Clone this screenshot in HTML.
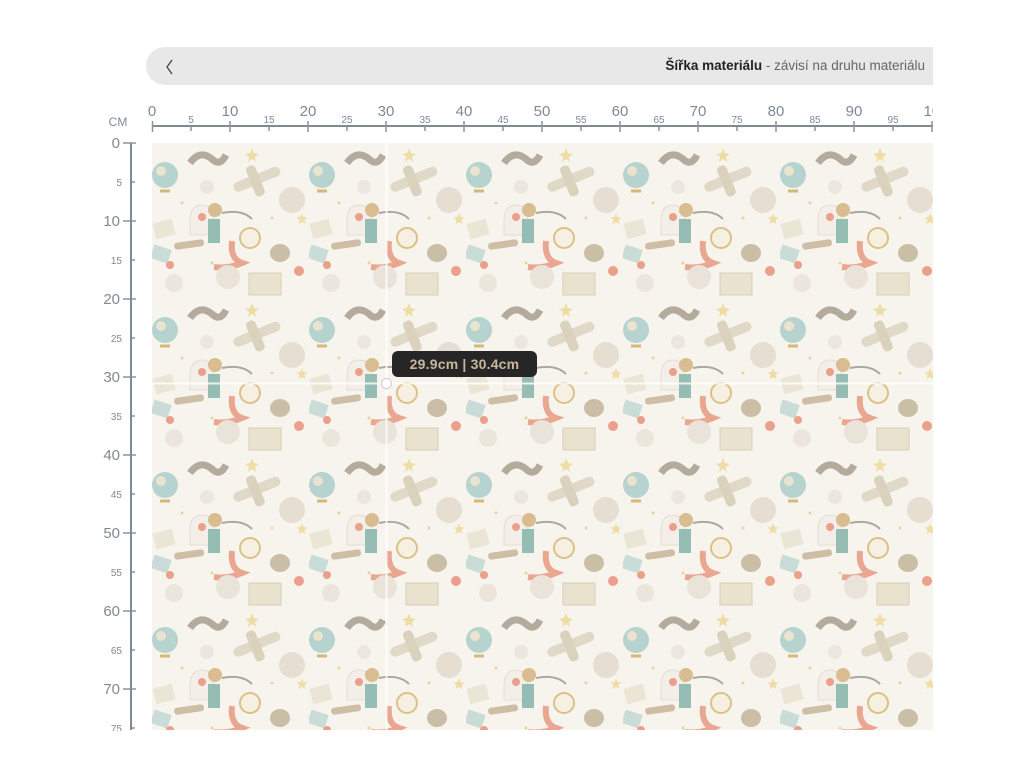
<!DOCTYPE html>
<html><head><meta charset="utf-8"><style>
html,body{margin:0;padding:0;background:#fff;width:1024px;height:768px;overflow:hidden;font-family:"Liberation Sans",sans-serif}
.bar{position:absolute;left:146px;top:47px;width:787px;height:38px;background:#e8e8e8;border-radius:19px 0 0 19px}
.bar .t{position:absolute;right:8px;top:11px;font-size:13.5px;color:#666}
.bar .t b{color:#222}
.tip{position:absolute;left:392px;top:351px;width:145px;height:26px;background:#262626;border-radius:6px;color:#c9b79b;font-weight:bold;font-size:14px;line-height:26px;text-align:center;letter-spacing:.2px}
</style></head><body>
<div class="bar">
<svg style="position:absolute;left:18px;top:11px" width="12" height="18"><path d="M8 2 L3 9 L8 16" stroke="#444" stroke-width="1.3" fill="none"/></svg>
<div class="t"><b>Šířka materiálu</b> - závisí na druhu materiálu</div></div>
<svg width="1024" height="768" style="position:absolute;left:0;top:0">
<defs>
<pattern id="p" x="152" y="143" width="157" height="155" patternUnits="userSpaceOnUse">
<rect width="157" height="155" fill="#f7f4ee"/>
<g opacity=".72">
<circle cx="13" cy="32" r="13" fill="#9cc6c4"/><circle cx="9" cy="28" r="5" fill="#e3dcc4"/><path d="M8 48 l10 0" stroke="#c9a14a" stroke-width="3"/>
<path d="M38 20 q10 -14 22 -4 q8 8 14 -4" stroke="#9a8e7e" stroke-width="7" fill="none"/>
<g transform="rotate(-22 103 37)"><rect x="80" y="32" width="50" height="10" rx="5" fill="#d8cfb8"/><rect x="98" y="22" width="10" height="32" rx="4" fill="#cfc5ab"/></g>
<circle cx="55" cy="44" r="7" fill="#e7e2d8"/>
<circle cx="140" cy="57" r="13" fill="#dfd6c6"/>
<path d="M38 78 q0 -16 12 -16 q12 0 12 16 v14 h-24z" fill="#f1ede6" stroke="#ddd4c6"/><circle cx="50" cy="74" r="4" fill="#e58065"/>
<circle cx="63" cy="67" r="7" fill="#cda66a"/><rect x="56" y="76" width="12" height="24" fill="#6ea79c"/>
<path d="M70 70 q20 -4 30 6" stroke="#8d8a80" stroke-width="2" fill="none"/>
<rect x="2" y="78" width="20" height="16" fill="#e6e0cc" transform="rotate(-15 12 86)"/>
<rect x="22" y="98" width="30" height="7" rx="3" fill="#bfa98a" transform="rotate(-8 37 101)"/>
<path d="M80 98 q-2 18 10 22 q-14 6 -28 4" stroke="#e4886c" stroke-width="6" fill="none"/>
<circle cx="98" cy="95" r="10" fill="#f5efe0" stroke="#d1ad5e" stroke-width="2"/>
<ellipse cx="128" cy="110" rx="10" ry="9" fill="#b8a98c"/>
<rect x="0" y="104" width="18" height="14" fill="#b9d3cf" transform="rotate(18 9 111)"/>
<circle cx="147" cy="128" r="5" fill="#e58065"/><circle cx="18" cy="122" r="4" fill="#e58065"/>
<circle cx="76" cy="134" r="12" fill="#e3ddd1"/><circle cx="22" cy="140" r="9" fill="#e6e0d4"/>
<rect x="97" y="130" width="32" height="22" fill="#e4dbc2" stroke="#cbbfa1"/>
<path d="M100 5 l2 5 l5 1 l-4 3 l1 5 l-4 -3 l-4 3 l1 -5 l-4 -3 l5 -1z" fill="#ecd48a"/>
<path d="M150 70 l1.5 4 l4 .5 l-3 2.5 l1 4 l-3.5 -2 l-3.5 2 l1 -4 l-3 -2.5 l4 -.5z" fill="#ecd48a"/>
<circle cx="30" cy="60" r="1.5" fill="#e2c979"/><circle cx="120" cy="75" r="1.5" fill="#e2c979"/><circle cx="60" cy="120" r="1.5" fill="#e2c979"/>
</g>
</pattern>
</defs>
<rect x="152" y="143" width="781" height="587" fill="url(#p)"/>
<line x1="386.5" y1="143" x2="386.5" y2="730" stroke="#fff" stroke-opacity=".8" stroke-width="2"/>
<line x1="152" y1="383.5" x2="933" y2="383.5" stroke="#fff" stroke-opacity=".8" stroke-width="2"/>
<circle cx="386.5" cy="383.5" r="5" fill="#fff" stroke="#ccc"/>
<g fill="#808a93" font-family="Liberation Sans,sans-serif">
<rect x="152" y="125" width="781" height="2"/>
<g stroke="#8a949c" stroke-width="1.5">
<path d="M152.5 121v11M230 121v11M308 121v11M386 121v11M464 121v11M542 121v11M620 121v11M698 121v11M776 121v11M854 121v11M932 121v11"/>
<path d="M191 127v4M269 127v4M347 127v4M425 127v4M503 127v4M581 127v4M659 127v4M737 127v4M815 127v4M893 127v4"/>
<path d="M123 143h13M123 221h13M123 299h13M123 377h13M123 455h13M123 533h13M123 611h13M123 689h13"/>
<path d="M131 182h4M131 260h4M131 338h4M131 416h4M131 494h4M131 572h4M131 650h4M131 728h4"/>
</g>
<rect x="130" y="143" width="2" height="587"/>
<text x="118" y="126" font-size="12" text-anchor="middle">CM</text>
<g font-size="15" text-anchor="middle">
<text x="152" y="116">0</text><text x="230" y="116">10</text><text x="308" y="116">20</text><text x="386" y="116">30</text><text x="464" y="116">40</text><text x="542" y="116">50</text><text x="620" y="116">60</text><text x="698" y="116">70</text><text x="776" y="116">80</text><text x="854" y="116">90</text><text x="936" y="116">100</text>
</g>
<g font-size="10" text-anchor="middle">
<text x="191" y="123">5</text><text x="269" y="123">15</text><text x="347" y="123">25</text><text x="425" y="123">35</text><text x="503" y="123">45</text><text x="581" y="123">55</text><text x="659" y="123">65</text><text x="737" y="123">75</text><text x="815" y="123">85</text><text x="893" y="123">95</text>
</g>
<g font-size="15" text-anchor="end">
<text x="120" y="148">0</text><text x="120" y="226">10</text><text x="120" y="304">20</text><text x="120" y="382">30</text><text x="120" y="460">40</text><text x="120" y="538">50</text><text x="120" y="616">60</text><text x="120" y="694">70</text>
</g>
<g font-size="10" text-anchor="end">
<text x="122" y="186">5</text><text x="122" y="264">15</text><text x="122" y="342">25</text><text x="122" y="420">35</text><text x="122" y="498">45</text><text x="122" y="576">55</text><text x="122" y="654">65</text><text x="122" y="732">75</text>
</g>
</g>
<rect x="933" y="90" width="91" height="60" fill="#fff"/>
<rect x="90" y="731" width="60" height="37" fill="#fff"/>
</svg>
<div class="tip">29.9cm | 30.4cm</div>
</body></html>
